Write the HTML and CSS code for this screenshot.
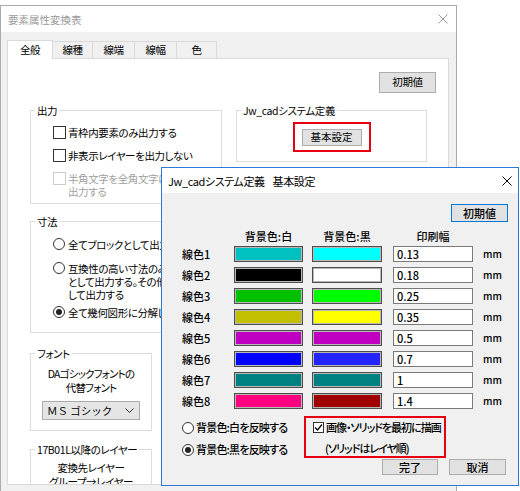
FILE: index.html
```html
<!DOCTYPE html>
<html lang="ja">
<head>
<meta charset="utf-8">
<title>要素属性変換表</title>
<link rel="stylesheet" href="styles.css">
</head>
<body>
<div class="win win-main">
  <div class="titlebar title-main">
    <span>要素属性変換表</span>
    <svg class="close" width="10" height="10" viewBox="0 0 10 10"><path d="M0.5 0.5L9.5 9.5M9.5 0.5L0.5 9.5"/></svg>
  </div>
  <div class="main-body">
    <div class="tabs">
      <div class="tab tab-active tab-w46">全般</div>
      <div class="tab tab-w41">線種</div>
      <div class="tab tab-w43">線端</div>
      <div class="tab tab-w43">線幅</div>
      <div class="tab tab-w41">色</div>
    </div>
    <div class="panel">
      <div class="panel-top"><button class="btn btn-init">初期値</button></div>
      <div class="cols">
        <div class="col-left">
          <div class="group grp-out">
            <div class="gtitle">出力</div>
            <div class="opt opt-first"><span class="cb"></span><span>青枠内要素のみ出力する</span></div>
            <div class="opt"><span class="cb"></span><span>非表示レイヤーを出力しない</span></div>
            <div class="opt opt-disabled"><span class="cb cb-disabled"></span><span>半角文字を全角文字に<br>出力する</span></div>
          </div>
          <div class="group grp-dim">
            <div class="gtitle">寸法</div>
            <div class="opt ropt-1"><span class="rb"></span><span>全てブロックとして出力する</span></div>
            <div class="opt ropt-2"><span class="rb"></span><span>互換性の高い寸法のみブロック<br>として出力する。その他は分解<br>して出力する</span></div>
            <div class="opt ropt-3"><span class="rb rb-on"></span><span>全て幾何図形に分解して出力する</span></div>
          </div>
          <div class="group grp-font">
            <div class="gtitle">フォント</div>
            <div class="ftext">DAゴシックフォントの<br>代替フォント</div>
            <div class="combo"><span>ＭＳ ゴシック</span><svg class="chev" width="9" height="5" viewBox="0 0 9 5"><path d="M0.5 0.5L4.5 4.5L8.5 0.5"/></svg></div>
          </div>
          <div class="group grp-layer">
            <div class="gtitle">17B01L以降のレイヤー</div>
            <div class="ltext">変換先レイヤー<br>グループ→レイヤー</div>
          </div>
        </div>
        <div class="col-right">
          <div class="group grp-jw">
            <div class="gtitle">Jw_cadシステム定義</div>
            <div class="redbox redbox-basic"><button class="btn btn-basic">基本設定</button></div>
          </div>
        </div>
      </div>
    </div>
  </div>
</div>

<div class="win win-sub">
  <div class="titlebar title-sub">
    <span>Jw_cadシステム定義<span class="tgap"></span>基本設定</span>
    <svg class="close close-dark" width="10" height="10" viewBox="0 0 10 10"><path d="M0.5 0.5L9.5 9.5M9.5 0.5L0.5 9.5"/></svg>
  </div>
  <div class="sub-body">
    <div class="sub-top"><button class="btn btn-default">初期値</button></div>
    <div class="color-grid">
      <div></div><div class="hdr hdr-sw1">背景色:白</div><div class="hdr hdr-sw2">背景色:黒</div><div class="hdr hdr-in">印刷幅</div><div></div>

      <div class="lbl">線色1</div><div class="sw sw-1" style="background:#00c0c0"></div><div class="sw sw-2" style="background:#00ffff"></div><div class="num">0.13</div><div class="mm">mm</div>
      <div class="lbl">線色2</div><div class="sw sw-1" style="background:#000000"></div><div class="sw sw-2" style="background:#ffffff"></div><div class="num">0.18</div><div class="mm">mm</div>
      <div class="lbl">線色3</div><div class="sw sw-1" style="background:#00c000"></div><div class="sw sw-2" style="background:#00ff00"></div><div class="num">0.25</div><div class="mm">mm</div>
      <div class="lbl">線色4</div><div class="sw sw-1" style="background:#c0c000"></div><div class="sw sw-2" style="background:#ffff00"></div><div class="num">0.35</div><div class="mm">mm</div>
      <div class="lbl">線色5</div><div class="sw sw-1" style="background:#c000c0"></div><div class="sw sw-2" style="background:#c000c0"></div><div class="num">0.5</div><div class="mm">mm</div>
      <div class="lbl">線色6</div><div class="sw sw-1" style="background:#0000ff"></div><div class="sw sw-2" style="background:#2424ff"></div><div class="num">0.7</div><div class="mm">mm</div>
      <div class="lbl">線色7</div><div class="sw sw-1" style="background:#008080"></div><div class="sw sw-2" style="background:#008080"></div><div class="num">1</div><div class="mm">mm</div>
      <div class="lbl">線色8</div><div class="sw sw-1" style="background:#ff0080"></div><div class="sw sw-2" style="background:#a00000"></div><div class="num">1.4</div><div class="mm">mm</div>
    </div>
    <div class="sub-bottom">
      <div class="bg-opts">
        <div class="bopt"><span class="rb rb-sm"></span><span>背景色:白を反映する</span></div>
        <div class="bopt bopt-2"><span class="rb rb-sm rb-on"></span><span>背景色:黒を反映する</span></div>
      </div>
      <div class="redbox redbox-draw">
        <div class="copt"><span class="cbx"><svg width="9" height="9" viewBox="0 0 9 9"><path d="M1 4.5L3.5 7L8 1.5"/></svg></span><span>画像・ソリッドを最初に描画</span></div>
        <div class="note">(ソリッドはレイヤ順)</div>
      </div>
    </div>
    <div class="sub-buttons">
      <button class="btn btn-ok">完了</button>
      <button class="btn btn-cancel">取消</button>
    </div>
  </div>
</div>
</body>
</html>
```

FILE: styles.css
```css
* { box-sizing: border-box; }
html, body { margin: 0; padding: 0; }
body {
  position: relative;
  width: 520px;
  height: 491px;
  overflow: hidden;
  background: #fff;
  font-family: "Noto Sans CJK JP", "Noto Sans", sans-serif;
  font-size: 11px;
  font-feature-settings: "palt";
  color: #000;
}
button { font: inherit; color: inherit; letter-spacing: inherit; margin: 0; padding: 0; cursor: default; }

.win { position: absolute; overflow: hidden; background: #f0f0f0; }

/* ---------- main window ---------- */
.win-main {
  left: 0;
  top: 5px;
  width: 457px;
  height: 487px;
  border: 1px solid #ababab;
  font-size: 10.5px;
  letter-spacing: -0.4px;
}
.titlebar { display: flex; align-items: center; justify-content: space-between; background: #fff; }
.title-main { height: 26px; padding: 0 8px 0 7px; color: #9a9a9a; letter-spacing: 0; }
.close { display: block; fill: none; stroke: #9a9a9a; stroke-width: 1; }
.close-dark { stroke: #000; }

.main-body { padding: 8px 0 0 6px; }
.tabs { display: flex; align-items: flex-end; height: 18px; }
.tab {
  height: 17px;
  line-height: 15px;
  text-align: center;
  border: 1px solid #d9d9d9;
  border-bottom: none;
  background: #f0f0f0;
  margin-left: -1px;
}
.tab-active {
  height: 19px;
  line-height: 17px;
  margin: 0 0 -1px 0;
  background: #fff;
  position: relative;
  z-index: 1;
}
.tab-w46 { width: 46px; }
.tab-w41 { width: 41px; }
.tab-w43 { width: 43px; }

.panel {
  width: 442px;
  height: 427px;
  overflow: hidden;
  background: #fff;
  border: 1px solid #d9d9d9;
  padding: 13px 12px 0 22px;
}
.panel-top { display: flex; justify-content: flex-end; }
.btn {
  display: block;
  background: #e1e1e1;
  border: 1px solid #adadad;
  text-align: center;
  line-height: 1;
}
.btn-init { width: 57px; height: 21px; }

.cols { display: flex; gap: 14px; margin-top: 17px; align-items: flex-start; }
.col-left { width: 192px; flex: none; }
.col-right { width: 191px; flex: none; }

.group { border: 1px solid #dcdcdc; }
.gtitle {
  display: table;
  margin: -7px 0 0 4px;
  padding: 0 2px;
  background: #fff;
  line-height: 13px;
  white-space: nowrap;
}

.opt {
  display: flex;
  align-items: flex-start;
  margin: 10px 0 0 22px;
  line-height: 13px;
  white-space: nowrap;
}
.opt-first { margin-top: 9px; }
.opt-disabled { color: #a0a0a0; }
.cb {
  flex: none;
  width: 13px;
  height: 13px;
  border: 1px solid #333;
  background: #fff;
  margin-right: 2px;
}
.cb-disabled { border-color: #cccccc; }
.rb {
  flex: none;
  width: 12px;
  height: 12px;
  margin: 0 3px 0 0;
  border: 1px solid #333;
  border-radius: 50%;
  background: #fff;
  display: flex;
  align-items: center;
  justify-content: center;
}
.rb-on::after {
  content: "";
  width: 6px;
  height: 6px;
  border-radius: 50%;
  background: #222;
}

.grp-out { padding-bottom: 5px; }
.grp-dim { margin-top: 17px; padding-bottom: 13px; }
.ropt-1 { margin-top: 10px; }
.ropt-2 { margin-top: 11px; }
.ropt-3 { margin-top: 5px; }

.grp-font { width: 122px; margin-top: 20px; padding-bottom: 10px; }
.ftext { margin-top: 7px; line-height: 14px; text-align: center; letter-spacing: -0.8px; }
.combo {
  width: 98px;
  height: 19px;
  margin: 6px auto 0;
  display: flex;
  align-items: center;
  justify-content: space-between;
  padding: 0 5px 0 4px;
  background: #e5e5e5;
  border: 1px solid #acacac;
  letter-spacing: 0;
  font-feature-settings: normal;
}
.chev { display: block; fill: none; stroke: #333; stroke-width: 1; }

.grp-layer { width: 122px; margin-top: 18px; }
.ltext { margin-top: 5px; line-height: 14px; text-align: center; white-space: nowrap; }

.grp-jw { padding-bottom: 9px; }
.redbox { border: 2px solid #e60012; }
.redbox-basic { width: 78px; margin: 5px auto 0; padding: 5px 7px 4px; }
.btn-basic { width: 60px; height: 17px; letter-spacing: 0; }

/* ---------- sub dialog ---------- */
.win-sub {
  left: 161px;
  top: 167px;
  width: 358px;
  height: 319px;
  border: 1px solid #2b7bd6;
}
.title-sub { height: 25px; padding: 0 6px; letter-spacing: -0.4px; }
.tgap { display: inline-block; width: 8px; }
.sub-body { padding: 11px 10px 0 20px; font-weight: 500; }
.sub-top { display: flex; justify-content: flex-end; }
.btn-default { width: 57px; height: 18px; border-color: #0078d7; }

.color-grid {
  display: grid;
  grid-template-columns: 52px 78px 81px 90px 1fr;
  grid-template-rows: 14px repeat(8, 21px);
  align-items: center;
  margin-top: 7px;
}
.hdr { text-align: center; line-height: 14px; white-space: nowrap; }
.hdr-sw1 { width: 69px; }
.hdr-sw2 { width: 70px; }
.hdr-in { width: 80px; }
.lbl { line-height: 14px; }
.sw {
  height: 16px;
  border: 1px solid #4d4d4d;
  box-shadow: inset 0 0 0 1px #b8b8b8;
}
.sw-1 { width: 69px; }
.sw-2 { width: 70px; }
.num {
  width: 80px;
  height: 16px;
  line-height: 14px;
  padding-left: 3px;
  background: #fff;
  border: 1px solid #7a7a7a;
}
.mm { font-size: 10px; line-height: 14px; }

.sub-bottom { display: flex; align-items: flex-start; margin-top: 5px; letter-spacing: -0.8px; }
.bg-opts { width: 122px; padding-top: 5px; flex: none; }
.bopt { display: flex; align-items: center; line-height: 13px; white-space: nowrap; }
.bopt-2 { margin-top: 9px; }
.rb-sm { width: 12px; height: 12px; margin-right: 2px; }

.redbox-draw { width: 142px; height: 42px; padding: 3px 0 0 7px; flex: none; }
.copt { display: flex; align-items: center; line-height: 13px; white-space: nowrap; letter-spacing: -1px; }
.cbx {
  flex: none;
  width: 11px;
  height: 11px;
  margin-right: 2px;
  border: 1px solid #333;
  background: #fff;
  display: flex;
  align-items: center;
  justify-content: center;
}
.cbx svg { display: block; fill: none; stroke: #000; stroke-width: 1.2; }
.note { margin: 8px 0 0 12px; line-height: 13px; white-space: nowrap; letter-spacing: -1px; }

.sub-buttons { display: flex; justify-content: flex-end; gap: 11px; margin-top: 1px; padding-right: 2px; }
.btn-ok { width: 56px; height: 16px; }
.btn-cancel { width: 57px; height: 16px; }
```
